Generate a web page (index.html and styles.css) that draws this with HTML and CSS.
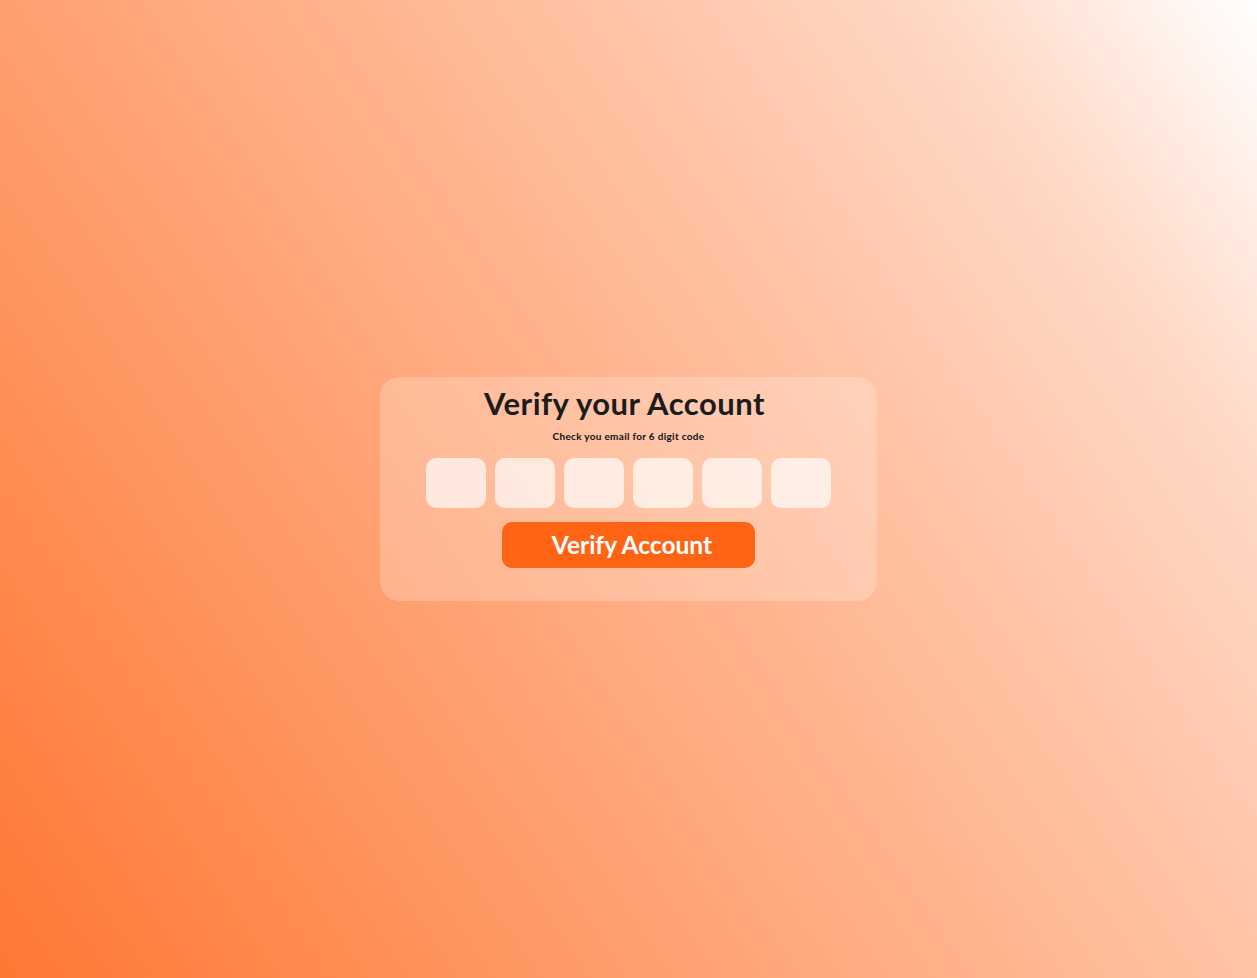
FILE: index.html
```html
<!DOCTYPE html>
<html lang="en">
<head>
<meta charset="utf-8">
<title>Verify your Account</title>
<link rel="stylesheet" href="styles.css">
</head>
<body>
<main class="page">
  <form class="card">
    <h1 class="title">Verify your Account</h1>
    <p class="subtitle">Check you email for 6 digit code</p>
    <div class="code">
      <input class="digit" type="text" maxlength="1">
      <input class="digit" type="text" maxlength="1">
      <input class="digit" type="text" maxlength="1">
      <input class="digit" type="text" maxlength="1">
      <input class="digit" type="text" maxlength="1">
      <input class="digit" type="text" maxlength="1">
    </div>
    <button class="btn" type="button">Verify Account</button>
  </form>
</main>
</body>
</html>
```
FILE: styles.css
```css
* { box-sizing: border-box; }
html, body { margin: 0; height: 100%; }
body {
  font-family: Lato, "Noto Sans", sans-serif;
  background: linear-gradient(56deg, #ff7733 0%, #ffc4a6 66%, #ffd8c5 83%, #ffffff 100%);
  min-height: 978px;
}
.page {
  height: 978px;
  display: flex;
  align-items: center;
  justify-content: center;
}
.card {
  width: 497px;
  height: 224px;
  border-radius: 20px;
  background: rgba(255, 255, 255, 0.22);
  display: flex;
  flex-direction: column;
  align-items: center;
  padding-top: 7px;
}
.title {
  margin: 0 8px 0 0;
  font-size: 31px;
  font-weight: 700;
  color: #1c1c1c;
  line-height: 38px;
  letter-spacing: 0.5px;
}
.subtitle {
  margin: 7px 0 0;
  font-size: 10px;
  font-weight: 700;
  color: #111;
  line-height: 14px;
  letter-spacing: 0.3px;
}
.code {
  display: flex;
  gap: 9px;
  margin-top: 15px;
}
.digit {
  width: 60px;
  height: 50px;
  border: none;
  border-radius: 10px;
  background: rgba(255, 255, 255, 0.68);
  outline: none;
  padding: 0;
}
.btn {
  margin-top: 14px;
  width: 253px;
  height: 46px;
  border: none;
  border-radius: 10px;
  background: #ff6414;
  color: #fff;
  font-family: Lato, "Noto Sans", sans-serif;
  font-size: 24.5px;
  font-weight: 700;
  padding: 0 0 0 7px;
  line-height: 44px;
  letter-spacing: 0;
}
```
